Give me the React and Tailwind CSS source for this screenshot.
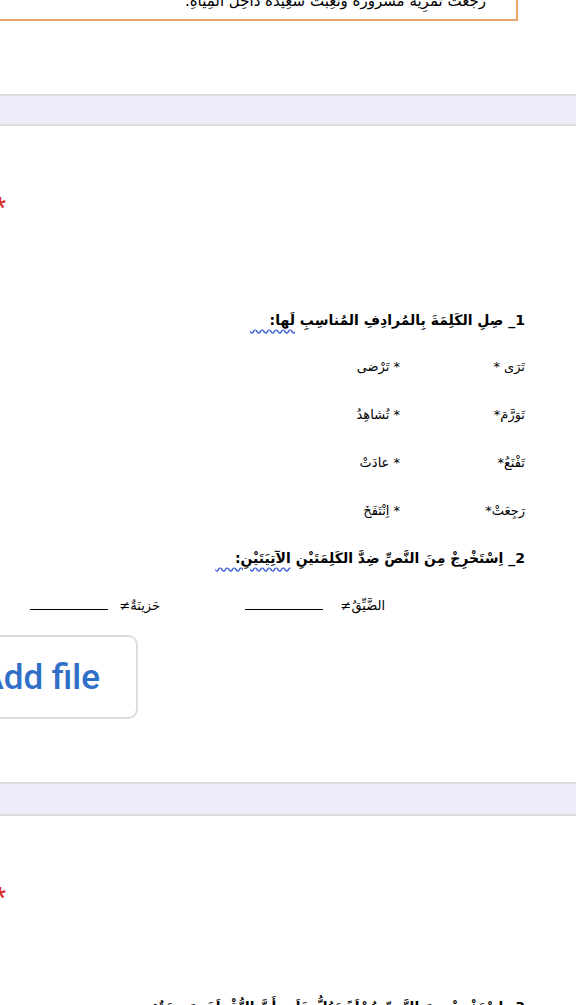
export default function App() {
  const ar = { fontFamily: '"DejaVu Sans", "Noto Sans", sans-serif' };
  const blank = <span className="inline-block h-[1px] w-[78px] border-b border-black align-baseline" />;

  return (
    <div className="relative w-[576px] h-[1005px] overflow-hidden bg-white">
      {/* first card: tail of the reading passage */}
      <div className="flex h-[94px] flex-col">
        <div
          dir="rtl"
          className="-mt-[14px] ml-[-30px] w-[548px] h-[35px] shrink-0 border-2 border-[#e9a76c] bg-white pr-[30px] pt-[2px] text-[15px] text-black"
          style={ar}
        >
          رَجَعَتْ تَمْرِيَةٌ مَسْرُورَةً وَتَعِبَتْ سَعِيدَةً دَاخِلَ الْمِيَاهِ.
        </div>
      </div>

      <div className="h-[32px] border-y-2 border-[#dcdadf] bg-[#eeeaf8]" />

      {/* second card */}
      <div className="flex h-[656px] flex-col">
        <div className="mt-[69px] ml-[-6px] h-[24px] text-[26px] font-bold leading-[24px] text-[#d93025]" style={{ fontFamily: 'Roboto, sans-serif' }}>
          *
        </div>

        <div dir="rtl" className="mt-[89px] pr-[51px] text-[13px] text-black" style={ar}>
          <p className="h-[24px] text-[14px] font-bold leading-[24px]">
            1_ صِلِ الكَلِمَةَ بِالمُرادِفِ المُناسِبِ{' '}
            <span className="underline decoration-wavy decoration-[#3c5fd6] underline-offset-4">لَها:&nbsp;&nbsp;&nbsp;&nbsp;</span>
          </p>

          <div className="mt-[23px] flex flex-col gap-[24px]">
            {[
              ['تَرَى *', '* تَرْضى'],
              ['تَوَرَّمَ*', '* تُشاهِدُ'],
              ['تَفْنَعُ*', '* عادَتْ'],
              ['رَجِعَتْ*', '* اِنْتَفَخَ'],
            ].map(([a, b]) => (
              <div key={a} className="flex h-[24px] items-center">
                <span className="w-[125px]">{a}</span>
                <span>{b}</span>
              </div>
            ))}
          </div>

          <p className="mt-[23px] h-[24px] text-[14px] font-bold leading-[24px]">
            2_ اِسْتَخْرِجْ مِنَ النَّصِّ ضِدَّ الكَلِمَتَيْنِ{' '}
            <span className="underline decoration-wavy decoration-[#3c5fd6] underline-offset-4">الآتِيَتَيْنِ:&nbsp;&nbsp;&nbsp;&nbsp;</span>
          </p>

          <div className="mt-[24px] flex h-[24px] items-center gap-[85px] pr-[140px]">
            <span className="flex w-[140px] items-baseline justify-between">
              <span>الضَّيِّقُ≠</span>
              {blank}
            </span>
            <span className="flex w-[130px] items-baseline justify-between">
              <span>حَزينَةٌ≠</span>
              {blank}
            </span>
          </div>
        </div>

        <div className="mt-[17px] ml-[-40px] flex h-[84px] w-[178px] shrink-0 items-center justify-end rounded-[10px] border-2 border-[#dadce0] pr-[36px]">
          <span className="whitespace-nowrap text-[35px] font-medium leading-none text-[#2f6fc8]" style={{ fontFamily: 'Roboto, sans-serif' }}>
            Add file
          </span>
        </div>
      </div>

      <div className="h-[34px] border-y-2 border-[#dcdadf] bg-[#eeeaf8]" />

      {/* third card */}
      <div className="flex flex-col">
        <div className="mt-[69px] ml-[-6px] h-[24px] text-[26px] font-bold leading-[24px] text-[#d93025]" style={{ fontFamily: 'Roboto, sans-serif' }}>
          *
        </div>
        <p dir="rtl" className="mt-[86px] pr-[51px] text-[14px] font-bold leading-[24px] text-black" style={ar}>
          3_ اِسْتَخْرِجْ مِنَ النَّصِّ جُمْلَةً تَدُلُّ عَلَى أَنَّ النُّقْطَةَ سَعِيدَةٌ:
        </p>
      </div>
    </div>
  );
}
